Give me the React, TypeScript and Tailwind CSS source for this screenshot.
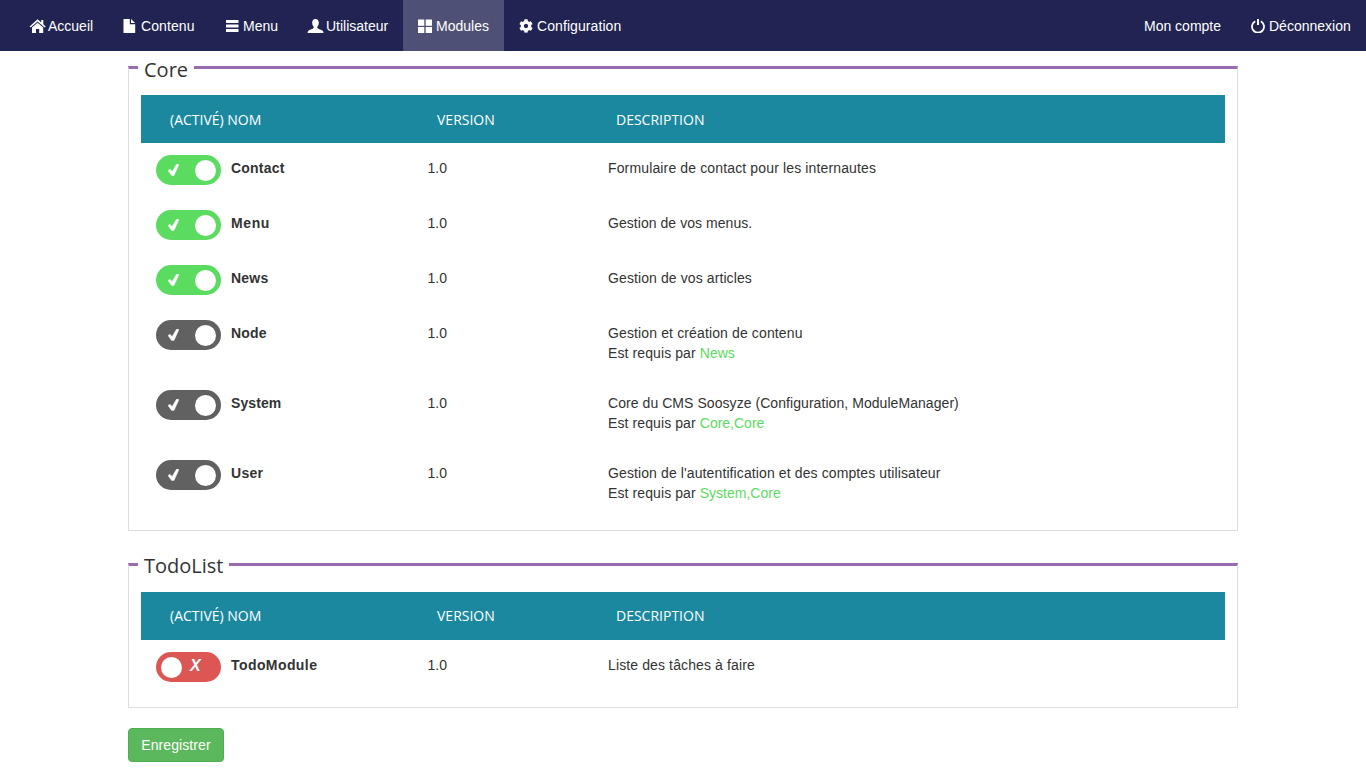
import React from "react";
import { FaCog } from "react-icons/fa";

const I = ({ children }: { children: React.ReactNode }) => (
  <svg width={14} height={14} viewBox="0 0 14 14" fill="white" className="shrink-0 overflow-visible">{children}</svg>
);

const Home = () => (
  <I>
    <path d="M7.6 0.3 L11.2 3.4 V1 H13.3 V5.2 L15.7 7.4 L14.7 8.5 L7.6 2.4 L0.6 8.5 L-0.4 7.4 Z" />
    <path d="M7.6 3.8 L13.2 8.6 V14 H9.2 V10 H6 V14 H2 V8.6 Z" />
  </I>
);
const FileI = () => (
  <I>
    <path d="M0.5 0 H6.8 V5.2 H12.2 V14 H0.5 Z" />
    <path d="M8 0 L12.2 4.1 H8 Z" />
  </I>
);
const Bars = () => (
  <I>
    <rect x="1" y="1" width="12.5" height="3" />
    <rect x="1" y="5.5" width="12.5" height="3" />
    <rect x="1" y="10" width="12.5" height="3" />
  </I>
);
const UserI = () => (
  <I>
    <path d="M7.5 0 C9.7 0 10.8 1.6 10.8 3.8 C10.8 5.8 10 7.2 9.2 8 C9.2 9 9.7 9.5 11.5 10.2 C13.5 11 15.5 11.5 15.5 14 H-0.5 C-0.5 11.5 1.5 11 3.5 10.2 C5.3 9.5 5.8 9 5.8 8 C5 7.2 4.2 5.8 4.2 3.8 C4.2 1.6 5.3 0 7.5 0 Z" />
  </I>
);
const Grid = () => (
  <I>
    <rect x="0" y="0.5" width="6.3" height="6.3" />
    <rect x="7.7" y="0.5" width="6.3" height="6.3" />
    <rect x="0" y="8" width="6.3" height="6" />
    <rect x="7.7" y="8" width="6.3" height="6" />
  </I>
);
const Cog = () => <FaCog size={14} color="white" className="shrink-0" />;
const Power = () => (
  <svg width={14} height={14} viewBox="0 0 14 14" fill="none" stroke="white" strokeWidth={1.8} className="shrink-0">
    <path d="M4.2 2.3 A6 6 0 1 0 9.8 2.3" />
    <path d="M7 0 V6" strokeWidth={2} />
  </svg>
);

const NavLink = ({ icon, label, active, w }: { icon?: React.ReactNode; label: string; active?: boolean; w: string }) => (
  <a className={`flex h-[51px] items-center gap-[4px] px-[15px] text-white ${active ? "bg-[#4e5175]" : ""}`}>
    {icon}
    <span className={`whitespace-nowrap ${w}`}>{label}</span>
  </a>
);

const Toggle = ({ state }: { state: "green" | "gray" | "red" }) => {
  if (state === "red") {
    return (
      <div className="flex h-[30px] w-[65px] shrink-0 items-center rounded-[15px] bg-[#dc5653] pl-[5px]">
        <div className="h-[21px] w-[21px] rounded-full bg-white" />
        <span className="-mt-[2px] ml-[8px] text-[16px] font-bold italic leading-none text-white">X</span>
      </div>
    );
  }
  return (
    <div className={`flex h-[30px] w-[65px] shrink-0 items-center justify-between rounded-[15px] pl-[12px] pr-[5px] ${state === "green" ? "bg-[#5bdb60]" : "bg-[#616161]"}`}>
      <svg width={11} height={12} viewBox="0 0 11 12" fill="white" stroke="white" strokeWidth={0.4}><path d="M8.6 0 L11 0.6 L6 11.5 H3.6 L0 6.6 L1.8 5.2 L4.2 7.4 Z" /></svg>
      <div className="h-[21px] w-[21px] rounded-full bg-white" />
    </div>
  );
};

type Mod = { name: string; state: "green" | "gray" | "red"; desc: string; req?: string; track: string; nameTrack: string };

const Row = ({ m }: { m: Mod }) => (
  <tr className={m.req ? "h-[70px]" : "h-[55px]"}>
    <td className="align-top pl-[15px] pt-[12px]">
      <div className="flex items-start gap-[10px]">
        <Toggle state={m.state} />
        <span className={`mt-[3px] font-bold ${m.nameTrack}`}>{m.name}</span>
      </div>
    </td>
    <td className="align-top pl-[14.5px] pt-[15px]">1.0</td>
    <td className="align-top pl-[15px] pt-[15px]">
      <div className={m.track}>{m.desc}</div>
      {m.req && (
        <div>
          <span className="tracking-[0.1px]">Est requis par </span>
          <span className="text-[#5bdb60]">{m.req}</span>
        </div>
      )}
    </td>
  </tr>
);

const Section = ({ title, mods, className, legendClass, thClass }: { title: string; mods: Mod[]; className?: string; legendClass: string; thClass: string }) => (
  <fieldset className={`mx-0 border-x border-b border-t-[3px] border-x-[#dddddd] border-b-[#dddddd] border-t-[#9b6bb0] px-[12px] pb-[12px] ${className ?? ""}`}>
    <legend className={`-ml-[3px] px-[6px] font-['Open_Sans',sans-serif] text-[20px] leading-[28px] text-[#333333] ${legendClass}`}>{title}</legend>
    <table className="mt-[11px] w-full table-fixed border-collapse">
      <colgroup>
        <col className="w-[272px]" />
        <col className="w-[180px]" />
        <col />
      </colgroup>
      <thead>
        <tr className="h-[48px] bg-[#1b889f] text-left font-['Open_Sans',sans-serif] text-[14px] text-white">
          <th className={`pl-[29px] font-normal ${thClass}`}>(ACTIVÉ) NOM</th>
          <th className={`pl-[24px] font-normal ${thClass}`}>VERSION</th>
          <th className={`pl-[23px] font-normal ${thClass}`}>DESCRIPTION</th>
        </tr>
      </thead>
      <tbody>
        {mods.map((m) => (
          <Row key={m.name} m={m} />
        ))}
      </tbody>
    </table>
  </fieldset>
);

const core: Mod[] = [
  { name: "Contact", state: "green", desc: "Formulaire de contact pour les internautes", track: "tracking-[0.14px]", nameTrack: "tracking-[0.2px]" },
  { name: "Menu", state: "green", desc: "Gestion de vos menus.", track: "tracking-[0.05px]", nameTrack: "tracking-[0.6px]" },
  { name: "News", state: "green", desc: "Gestion de vos articles", track: "tracking-[0.1px]", nameTrack: "tracking-[0.2px]" },
  { name: "Node", state: "gray", desc: "Gestion et création de contenu", req: "News", track: "tracking-[0.13px]", nameTrack: "tracking-[0.2px]" },
  { name: "System", state: "gray", desc: "Core du CMS Soosyze (Configuration, ModuleManager)", req: "Core,Core", track: "tracking-[0.06px]", nameTrack: "tracking-[0.1px]" },
  { name: "User", state: "gray", desc: "Gestion de l'autentification et des comptes utilisateur", req: "System,Core", track: "tracking-[0.11px]", nameTrack: "tracking-[0.3px]" },
];

export default function App() {
  return (
    <div className="min-h-[768px] bg-white font-['Liberation_Sans',sans-serif] text-[14px] leading-[20px] text-[#333333]">
      <nav className="flex h-[51px] items-center justify-between bg-[#212452] pl-[15px]">
        <div className="flex">
          <NavLink icon={<Home />} label="Accueil" w="w-[45px]" />
          <NavLink icon={<FileI />} label="Contenu" w="w-[54px] tracking-[0.1px]" />
          <NavLink icon={<Bars />} label="Menu" w="w-[35px]" />
          <NavLink icon={<UserI />} label="Utilisateur" w="w-[62px]" />
          <NavLink icon={<Grid />} label="Modules" active w="w-[53px]" />
          <NavLink icon={<Cog />} label="Configuration" w="w-[85px] tracking-[0.08px]" />
        </div>
        <div className="flex">
          <NavLink label="Mon compte" w="w-[77px]" />
          <NavLink icon={<Power />} label="Déconnexion" w="w-[82px]" />
        </div>
      </nav>
      <div className="mx-auto w-[1110px]">
        <Section title="Core" mods={core} legendClass="pt-[5px]" thClass="pt-[1px]" />
        <Section
          title="TodoList"
          mods={[{ name: "TodoModule", state: "red", desc: "Liste des tâches à faire", track: "tracking-[0.12px]", nameTrack: "tracking-[0.42px]" }]}
          className="mt-[17px]"
          legendClass="pt-[4px] pb-[1px]"
          thClass="pt-0"
        />
        <button className="mt-[20px] block h-[34px] w-[96px] rounded-[4px] border border-[#4cae4c] bg-[#5cb85c] text-center tracking-[0.1px] text-white">Enregistrer</button>
      </div>
    </div>
  );
}
